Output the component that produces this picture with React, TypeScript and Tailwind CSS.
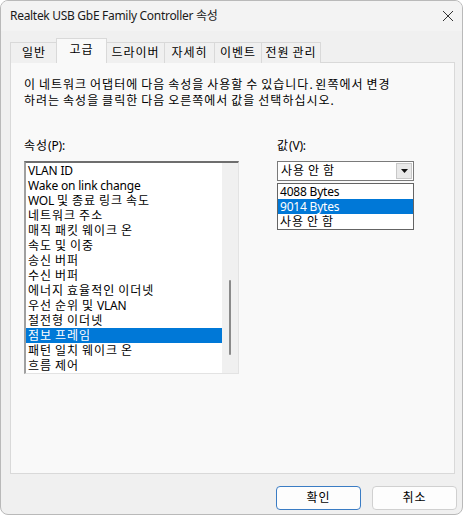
import React from 'react';

const font = "font-['Noto_Sans','Noto_Sans_CJK_KR',sans-serif]";

// Hangul runs are spaced out a bit so they take the width of the reference font
function K({ t }: { t: string }) {
  const parts = t.split(/([\uAC00-\uD7A3]+)/);
  return (
    <span className="whitespace-pre">
      {parts.map((p, i) =>
        /[\uAC00-\uD7A3]/.test(p) ? (
          <span key={i} className="tracking-[1px]">{p}</span>
        ) : (
          <React.Fragment key={i}>{p}</React.Fragment>
        )
      )}
    </span>
  );
}

const tabs = [
  { label: '일반', w: 'w-[47px]' },
  { label: '고급', w: 'w-[51px]', active: true },
  { label: '드라이버', w: 'w-[58px]' },
  { label: '자세히', w: 'w-[50px]' },
  { label: '이벤트', w: 'w-[47px]' },
  { label: '전원 관리', w: 'w-[60px]' },
];

const props = [
  'VLAN ID',
  'Wake on link change',
  'WOL 및 종료 링크 속도',
  '네트워크 주소',
  '매직 패킷 웨이크 온',
  '속도 및 이중',
  '송신 버퍼',
  '수신 버퍼',
  '에너지 효율적인 이더넷',
  '우선 순위 및 VLAN',
  '절전형 이더넷',
  '점보 프레임',
  '패턴 일치 웨이크 온',
  '흐름 제어',
];

const values = ['4088 Bytes', '9014 Bytes', '사용 안 함'];

export default function App() {
  return (
    <div className={`w-[465px] h-[518px] bg-white text-[12px] tracking-[-0.2px] text-black ${font}`}>
      <div className="w-[463px] h-[515px] bg-[#f0f0f0] border border-[#b9b9b9] rounded-[8px] flex flex-col overflow-hidden">
        {/* title bar */}
        <div className="h-[30px] flex items-center justify-between pl-[9px] pr-[8px] bg-[#f3f3f3]">
          <span className="text-[12px] tracking-[-0.3px] text-[#1a1a1a]">Realtek USB GbE Family Controller 속성</span>
          <svg width="12" height="12" viewBox="0 0 12 12">
            <path d="M1 1 L11 11 M11 1 L1 11" stroke="#333" strokeWidth="1" />
          </svg>
        </div>

        {/* tabs */}
        <div className="mt-[7px] ml-[9px] h-[25px] flex items-end relative z-10">
          {tabs.map((t) =>
            t.active ? (
              <div key={t.label} className={`${t.w} h-[25px] -mx-[1px] bg-[#f9f9f9] border border-b-0 border-[#d9d9d9] flex justify-center pt-[2px]`}>
                <K t={t.label} />
              </div>
            ) : (
              <div key={t.label} className={`${t.w} h-[21px] border border-r-0 last:border-r border-b-0 border-[#d9d9d9] bg-[#f0f0f0] flex items-center justify-center`}>
                <K t={t.label} />
              </div>
            )
          )}
        </div>

        {/* panel */}
        <div className="ml-[9px] -mt-[1px] w-[445px] h-[412px] bg-[#f9f9f9] border border-[#d9d9d9] pl-[13px] pt-[14px]">
          <p className="leading-[16px]">
            <K t="이 네트워크 어댑터에 다음 속성을 사용할 수 있습니다. 왼쪽에서 변경" />
            <br />
            <K t="하려는 속성을 클릭한 다음 오른쪽에서 값을 선택하십시오." />
          </p>

          <div className="mt-[29px] flex gap-[38px]">
            <div className="flex flex-col">
              <span className="leading-[16px]"><K t="속성(P):" /></span>
              <div className="mt-[7px] w-[215px] h-[213px] bg-white border-t-2 border-l-2 border-t-[#6e6e6e] border-l-[#a0a0a0] border-r border-b border-r-[#e3e3e3] border-b-[#e3e3e3] flex">
                <div className="flex-1 flex flex-col">
                  {props.map((p) => (
                    <div
                      key={p}
                      className={`h-[15px] leading-[15px] pl-[2px] whitespace-nowrap overflow-hidden ${p === '점보 프레임' ? 'bg-[#0078d7] text-white' : ''}`}
                    >
                      <K t={p} />
                    </div>
                  ))}
                </div>
                <div className="w-[16px] bg-[#f0f0f0] flex justify-center pt-[117px]">
                  <div className="w-[2px] h-[75px] bg-[#8a8a8a] rounded-full" />
                </div>
              </div>
            </div>

            <div className="flex flex-col">
              <span className="leading-[16px]"><K t="값(V):" /></span>
              <div className="relative mt-[7px]">
                <div className="w-[137px] h-[20px] bg-white border border-[#7a7a7a] flex items-center justify-between pl-[3px] pr-[1px]">
                  <K t="사용 안 함" />
                  <div className="w-[16px] h-[16px] bg-[#e9e9e9] border border-[#c8c8c8] flex items-center justify-center">
                    <svg width="7" height="4" viewBox="0 0 7 4">
                      <path d="M0 0 L7 0 L3.5 4 Z" fill="#111" />
                    </svg>
                  </div>
                </div>
                <div className="absolute left-0 top-[22px] w-[137px] bg-white border border-[#646464] flex flex-col">
                  {values.map((v) => (
                    <div
                      key={v}
                      className={`h-[15px] leading-[15px] pl-[2px] overflow-hidden ${v === '9014 Bytes' ? 'bg-[#0078d7] text-white' : ''}`}
                    >
                      <K t={v} />
                    </div>
                  ))}
                </div>
              </div>
            </div>
          </div>
        </div>

        {/* buttons */}
        <div className="mt-[12px] flex justify-end gap-[11px] pr-[5px]">
          <button className="w-[85px] h-[24px] bg-[#fdfdfd] border border-[#3a7cc4] rounded-[4px] text-[12px]"><K t="확인" /></button>
          <button className="w-[85px] h-[24px] bg-[#fdfdfd] border border-[#d0d0d0] rounded-[4px] text-[12px]"><K t="취소" /></button>
        </div>
      </div>
    </div>
  );
}
